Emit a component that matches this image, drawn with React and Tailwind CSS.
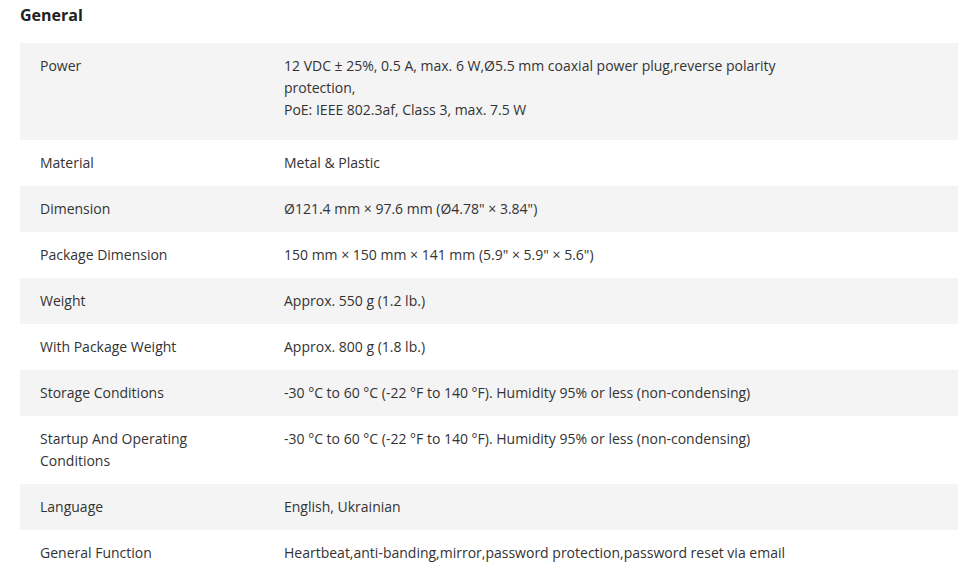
const rows = [
  {
    label: 'Power',
    value: [
      '12 VDC ± 25%, 0.5 A, max. 6 W,Ø5.5 mm coaxial power plug,reverse polarity protection,',
      'PoE: IEEE 802.3af, Class 3, max. 7.5 W',
    ],
    extra: true,
  },
  { label: 'Material', value: ['Metal & Plastic'] },
  { label: 'Dimension', value: ['Ø121.4 mm × 97.6 mm (Ø4.78" × 3.84")'] },
  { label: 'Package Dimension', value: ['150 mm × 150 mm × 141 mm (5.9" × 5.9" × 5.6")'] },
  { label: 'Weight', value: ['Approx. 550 g (1.2 lb.)'] },
  { label: 'With Package Weight', value: ['Approx. 800 g (1.8 lb.)'] },
  { label: 'Storage Conditions', value: ['-30 °C to 60 °C (-22 °F to 140 °F). Humidity 95% or less (non-condensing)'] },
  { label: 'Startup And Operating Conditions', value: ['-30 °C to 60 °C (-22 °F to 140 °F). Humidity 95% or less (non-condensing)'] },
  { label: 'Language', value: ['English, Ukrainian'] },
  { label: 'General Function', value: ['Heartbeat,anti-banding,mirror,password protection,password reset via email'] },
]

export default function App() {
  return (
    <div className="bg-white px-5 pt-1 font-['Open_Sans',sans-serif] text-[#333]">
      <h2 className="mb-[17px] text-[16px] font-bold leading-[22px] text-[#222]">General</h2>
      <div className="w-[938px]">
        {rows.map((row, i) => (
          <div
            key={row.label}
            className={`flex text-[14px] leading-[22px] ${i % 2 === 0 ? 'bg-[#f4f4f4]' : 'bg-white'}`}
          >
            <div className="w-[264px] shrink-0 pl-5 pr-[44px] py-3">
              {row.label}
            </div>
            <div className={`w-[520px] pt-3 ${row.extra ? 'pb-[19px]' : 'pb-3'}`}>
              {row.value.map((line) => (
                <div key={line}>{line}</div>
              ))}
            </div>
          </div>
        ))}
      </div>
    </div>
  )
}
